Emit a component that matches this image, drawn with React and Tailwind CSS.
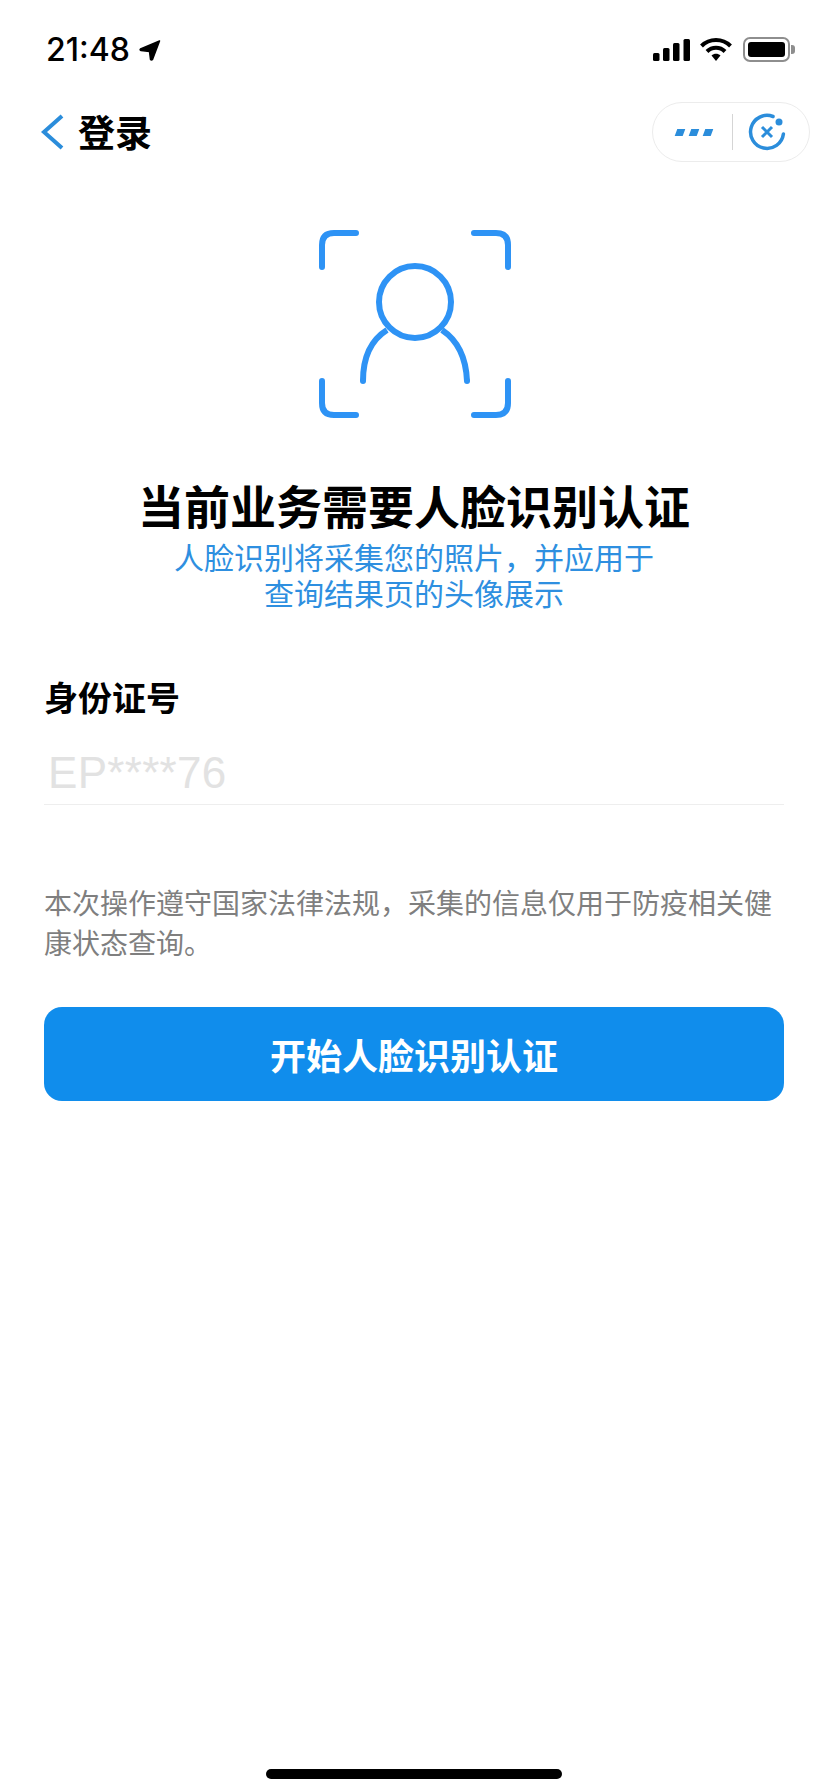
const cjk = '"Noto Sans CJK SC", sans-serif';

function StatusBar() {
  return (
    <div className="h-[100px] pl-[46px] pr-[33px] pt-[30px] flex justify-between items-start">
      <div className="flex items-center h-[40px]">
        <span className="text-[32px] font-medium text-black font-['Inter',sans-serif]">21:48</span>
        <svg width="22" height="21" viewBox="0 0 22 21" className="ml-[9px]">
          <path d="M20.5 1 L1.5 9 Q0.5 10 2 10.5 L10.5 11.5 L11.5 19.5 Q12.5 20.5 13.5 19.5 Z" fill="#000" stroke="#000" strokeWidth="1.5" strokeLinejoin="round" />
        </svg>
      </div>
      <div className="flex items-start mt-[7px]">
        <svg width="37" height="24" viewBox="0 0 37 24" className="mt-[1px]">
          <rect x="0" y="15" width="6.5" height="8" rx="1.5" fill="#000" />
          <rect x="10" y="10" width="6.5" height="13" rx="1.5" fill="#000" />
          <rect x="20" y="5" width="6.5" height="18" rx="1.5" fill="#000" />
          <rect x="30.5" y="1" width="6.5" height="22" rx="1.5" fill="#000" />
        </svg>
        <svg width="32" height="25" viewBox="0 0 32 25" fill="none" className="ml-[10px]">
          <path d="M1.5 9 C9.5 1 22.5 1 30.5 9" stroke="#000" strokeWidth="4" />
          <path d="M7 14.5 C12 9.5 20 9.5 25 14.5" stroke="#000" strokeWidth="4" />
          <path d="M11.5 18.5 L16 24 L20.5 18.5 C18 16 14 16 11.5 18.5 Z" fill="#000" />
        </svg>
        <div className="flex items-center ml-[11px]">
          <div className="w-[47px] h-[25px] rounded-[7px] border-2 border-[#8e8e8e] p-[3px]">
            <div className="w-full h-full rounded-[3px] bg-black" />
          </div>
          <div className="w-[4px] h-[9px] bg-[#8e8e8e] rounded-r-[3px] ml-[1px]" />
        </div>
      </div>
    </div>
  );
}

function NavBar() {
  return (
    <div className="relative h-[62px] flex items-center pl-[40px]">
      <svg width="24" height="36" viewBox="0 0 24 36" fill="none" className="mt-[1px]">
        <path d="M22 2 L4 18 L22 34" stroke="#2b8ddb" strokeWidth="4" />
      </svg>
      <span className="ml-[14px] text-[37px] font-bold text-black leading-none" style={{ fontFamily: cjk }}>登录</span>
      <div className="absolute right-[18px] top-[2px] w-[158px] h-[60px] rounded-full border border-[#ececec] flex items-center">
        <div className="w-[79px] flex justify-center gap-[6px] pl-[3px] mt-[1px]">
          <span className="w-[8px] h-[7px] bg-[#2b8ddb] skew-x-[-20deg]" />
          <span className="w-[8px] h-[7px] bg-[#2b8ddb] skew-x-[-20deg]" />
          <span className="w-[8px] h-[7px] bg-[#2b8ddb] skew-x-[-20deg]" />
        </div>
        <div className="w-px h-[36px] bg-[#d5d5d5]" />
        <svg width="38" height="38" viewBox="0 0 38 38" fill="none" className="ml-[15px]">
          <path d="M25 3.5 A16.5 16.5 0 1 0 35.4 21" stroke="#2b8ddb" strokeWidth="3.5" strokeLinecap="round" />
          <circle cx="31" cy="9" r="3.5" fill="#2b8ddb" />
          <path d="M14 14 L24 24 M24 14 L14 24" stroke="#2b8ddb" strokeWidth="3" />
        </svg>
      </div>
    </div>
  );
}

function FaceIcon() {
  return (
    <svg width="192" height="188" viewBox="0 0 192 188" fill="none" stroke="#2e93f5" strokeWidth="6" strokeLinecap="round">
      <path d="M3 37 V15 Q3 3 15 3 H37" />
      <path d="M155 3 H177 Q189 3 189 15 V37" />
      <path d="M3 151 V173 Q3 185 15 185 H37" />
      <path d="M155 185 H177 Q189 185 189 173 V151" />
      <circle cx="96" cy="72" r="36" />
      <path d="M44 151 C44 126 52 110 68 100" strokeLinecap="butt" />
      <path d="M123 100 C138 110 147 126 148 151" strokeLinecap="butt" />
      <circle cx="44" cy="151" r="3" fill="#2e93f5" stroke="none" />
      <circle cx="148" cy="151" r="3" fill="#2e93f5" stroke="none" />
    </svg>
  );
}

export default function App() {
  return (
    <div className="w-[828px] h-[1792px] bg-white relative overflow-hidden" style={{ fontFamily: cjk }}>
      <StatusBar />
      <NavBar />
      <div className="flex justify-center mt-[68px] pl-[1px]">
        <FaceIcon />
      </div>
      <h1 className="mt-[59px] text-center text-[46px] leading-[54px] font-bold text-black">当前业务需要人脸识别认证</h1>
      <div className="mt-[7px] text-center text-[30px] leading-[36px] text-[#2e8fe0]">
        <p>人脸识别将采集您的照片，并应用于</p>
        <p>查询结果页的头像展示</p>
      </div>
      <div className="px-[44px]">
        <div className="mt-[63px] text-[34px] leading-[48px] font-bold text-black">身份证号</div>
        <div className="mt-[22px] h-[62px] border-b border-[#eeeeee] pl-[4px] text-[44px] leading-[60px] tracking-[0.3px] text-[#e2e2e2] font-['Liberation_Sans',sans-serif]">EP****76</div>
        <p className="mt-[77px] text-[28px] leading-[40px] text-[#7f7f7f]">本次操作遵守国家法律法规，采集的信息仅用于防疫相关健康状态查询。</p>
        <button className="mt-[45px] w-full h-[94px] rounded-[18px] bg-[#108dec] text-white text-[36px] font-bold">开始人脸识别认证</button>
      </div>
      <div className="absolute bottom-[13px] left-[266px] w-[296px] h-[10px] rounded-full bg-black" />
    </div>
  );
}
